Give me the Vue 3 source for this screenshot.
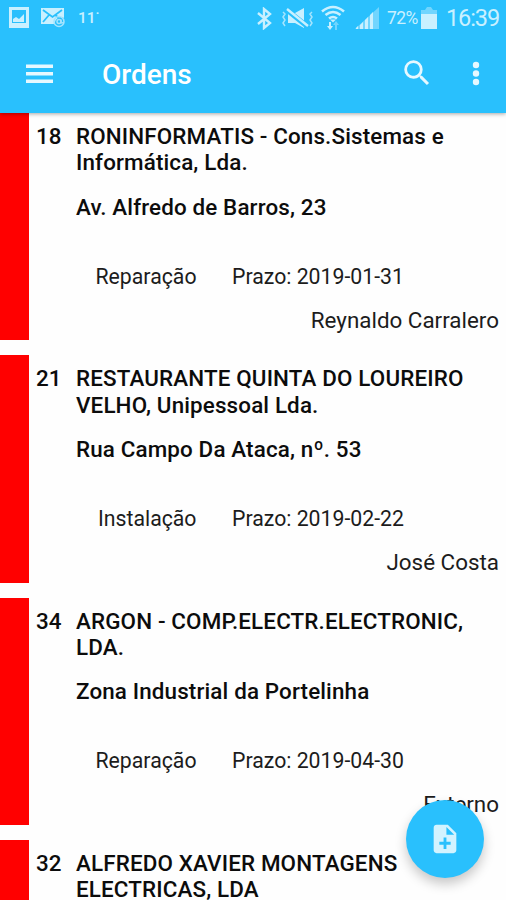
<template>
  <div class="app">
    <header class="header">
      <div class="status-bar">
        <div class="notifications">
          <svg class="status-icon" width="20" height="22" viewBox="0 0 20 22">
            <path d="M0 0h20v21H0z" />
            <path class="cut" d="M3 3h14v13H3z" />
            <path d="M4 15v-3l3-2 3 2 5-5v8z" />
          </svg>
          <svg class="status-icon mail" width="25" height="20" viewBox="0 0 25 20">
            <path d="M0 0h23v10a6 6 0 0 0-9 6H0z" />
            <path class="cut-line" d="M2 2l9.500 7L21 2M2 14l6-7M14.500 7l3 3" />
            <circle class="ring" cx="18" cy="13.500" r="5" />
            <circle class="ring" cx="18" cy="13.500" r="2" />
            <path class="ring" d="M20 11.500v3q1 1 3-.5" />
          </svg>
          <span class="temperature">11˙</span>
        </div>
        <div class="indicators">
          <svg class="status-icon" width="17" height="23" viewBox="0 0 17 23">
            <path class="line" d="M2 6l12 10-6 5V2l6 5L2 17" />
          </svg>
          <svg class="status-icon mute" width="33" height="21" viewBox="0 0 33 21">
            <path class="thin" d="M2 4l2 2-2 3 2 3-2 3 2 3M31 4l-2 2 2 3-2 3 2 3-2 3" />
            <path d="M7 5h7l9-5v20l-9-5H7z" />
            <path class="cut-line wide" d="M6 2l21 17" />
            <path class="line" d="M6 1l21 17" />
          </svg>
          <svg class="status-icon wifi" width="24" height="26" viewBox="0 0 24 26">
            <path class="line wave" d="M1 6.500q11-9 22 0M4.500 10q7.500-6 15 0M8 13.500q4-3 8 0" />
            <path d="M9 14.500h6l-3 3z" />
            <path d="M8 17h2v4h2l-3 4-3-4h2z" />
            <path class="faded" d="M14 25h2v-5h2l-3-4-3 4h2z" />
          </svg>
          <svg class="status-icon signal" width="24" height="22" viewBox="0 0 24 22">
            <path class="faded" d="M0 22L24 0v22z" />
            <path d="M1 21l2-2v3H1zM5 18l3-3v7H5zM10 13l3-3v12h-3zM15 8l3-3v17h-3z" />
          </svg>
          <span class="percent">72%</span>
          <svg class="status-icon battery" width="16" height="22" viewBox="0 0 16 22">
            <path class="faded" d="M0 3h4l2-3h4l2 3h4v5H0z" />
            <path d="M0 7h16v15H0z" />
          </svg>
          <span class="clock">16:39</span>
        </div>
      </div>
      <div class="toolbar">
        <svg class="menu" width="28" height="20" viewBox="0 0 28 20">
          <path d="M0 .500h27v3.500H0zM0 8h27v3.500H0zM0 15.500h27v3.500H0z" />
        </svg>
        <h1 class="title">Ordens</h1>
        <svg class="search" width="34" height="34" viewBox="0 0 24 24">
          <path
            d="M15.500 14h-.79l-.28-.27A6.471 6.471 0 0 0 16 9.500 6.500 6.500 0 1 0 9.500 16c1.610 0 3.090-.59 4.230-1.570l.27.28v.79l5 4.990L20.490 19l-4.990-5zm-6 0C7.010 14 5 11.990 5 9.500S7.010 5 9.500 5 14 7.010 14 9.500 11.990 14 9.500 14z"
          />
        </svg>
        <svg class="more" width="8" height="26" viewBox="0 0 8 26">
          <circle cx="4" cy="4" r="3.200" />
          <circle cx="4" cy="12.500" r="3.200" />
          <circle cx="4" cy="21" r="3.200" />
        </svg>
      </div>
    </header>

    <main class="orders">
      <article v-for="order in orders" :key="order.id" class="order">
        <span class="order-id">{{ order.id }}</span>
        <div class="order-body">
          <h2 class="client">
            <span v-for="line in order.client" :key="line" class="client-line">{{ line }}</span>
          </h2>
          <template v-if="order.address">
            <p class="address">{{ order.address }}</p>
            <div class="meta">
              <span class="type">{{ order.type }}</span>
              <span>Prazo: {{ order.deadline }}</span>
            </div>
            <p class="technician">{{ order.technician }}</p>
          </template>
        </div>
      </article>
    </main>

    <button class="fab" aria-label="Nova ordem">
      <svg width="34" height="34" viewBox="0 0 24 24">
        <path
          d="M14 2H6c-1.100 0-1.990.9-1.990 2L4 20c0 1.100.89 2 1.990 2H18c1.100 0 2-.9 2-2V8l-6-6zm2 14h-3v3h-2v-3H8v-2h3v-3h2v3h3v2zm-3-7V3.500L18.500 9H13z"
        />
      </svg>
    </button>
  </div>
</template>

<script setup>
import { ref } from 'vue'

const orders = ref([
  {
    id: 18,
    client: ['RONINFORMATIS - Cons.Sistemas e', 'Informática, Lda.'],
    address: 'Av. Alfredo de Barros, 23',
    type: 'Reparação',
    deadline: '2019-01-31',
    technician: 'Reynaldo Carralero'
  },
  {
    id: 21,
    client: ['RESTAURANTE QUINTA DO LOUREIRO', 'VELHO, Unipessoal Lda.'],
    address: 'Rua Campo Da Ataca, nº. 53',
    type: 'Instalação',
    deadline: '2019-02-22',
    technician: 'José Costa'
  },
  {
    id: 34,
    client: ['ARGON - COMP.ELECTR.ELECTRONIC,', 'LDA.'],
    address: 'Zona Industrial da Portelinha',
    type: 'Reparação',
    deadline: '2019-04-30',
    technician: 'Externo'
  },
  {
    id: 32,
    client: ['ALFREDO XAVIER MONTAGENS', 'ELECTRICAS, LDA']
  }
])
</script>

<style>
body {
  background: #fefefe;
}
</style>

<style scoped>
.app {
  position: relative;
  display: flex;
  flex-direction: column;
  height: 900px;
  overflow: hidden;
  font-family: Roboto, sans-serif;
  color: #0c0c0c;
}

.header {
  position: relative;
  z-index: 1;
  flex: none;
  height: 113px;
  background: #29c0fd;
  box-shadow: 0 1px 4px rgba(0, 0, 0, 0.35);
  color: #fff;
}

.status-bar {
  display: flex;
  justify-content: space-between;
  height: 36px;
  padding: 0 7px 0 9px;
  color: #c9f0ff;
}

.notifications,
.indicators {
  display: flex;
  align-items: center;
}

.status-icon {
  flex: none;
  fill: #c9f0ff;
}

.cut {
  fill: #29c0fd;
}

.cut-line {
  fill: none;
  stroke: #29c0fd;
  stroke-width: 1.8;
}

.cut-line.wide {
  stroke-width: 5;
}

.line {
  fill: none;
  stroke: #c9f0ff;
  stroke-width: 2.4;
}

.line.wave {
  stroke-width: 2.6;
}

.ring,
.thin {
  fill: none;
  stroke: #a5e4fe;
  stroke-width: 1.5;
}

.faded {
  opacity: 0.45;
}

.mail {
  margin: 0 0 1px 12px;
}

.temperature {
  margin-left: 12px;
  font-size: 15.5px;
  font-weight: 500;
}

.mute {
  margin-left: 8px;
}

.wifi {
  margin-left: 7px;
}

.signal {
  margin: 0 8px 0 10px;
}

.percent {
  width: 34px;
  font-size: 17.5px;
  letter-spacing: -0.6px;
}

.battery {
  margin-right: 9px;
}

.clock {
  width: 53px;
  font-size: 23.5px;
  letter-spacing: -1.1px;
}

.toolbar {
  display: flex;
  align-items: center;
  height: 76px;
  padding: 0 26px;
}

.toolbar svg {
  fill: #e6f8ff;
}

.title {
  flex: 1;
  margin: 0 0 0 48px;
  font-size: 28px;
  font-weight: 500;
}

.search {
  margin: -2px 38px 0 0;
}

.orders {
  display: flex;
  flex-direction: column;
  gap: 15px;
}

.order {
  display: flex;
  flex: none;
  box-sizing: border-box;
  height: 227.3px;
  padding: 10px 7px 0;
  border-left: 29px solid #f00;
  font-size: 22.4px;
  line-height: 26.2px;
}

.order-id {
  flex: none;
  width: 40px;
  font-weight: 500;
}

.order-body {
  flex: 1;
}

.client,
.address,
.technician {
  margin: 0;
  font-size: inherit;
  white-space: nowrap;
}

.client,
.address {
  font-weight: 500;
  letter-spacing: 0.14px;
}

.client-line {
  display: block;
}

.address {
  margin-top: 18.3px;
}

.meta {
  display: flex;
  gap: 35.5px;
  margin-top: 43.7px;
  font-size: 21.25px;
}

.meta,
.technician {
  color: #1c1c1c;
}

.type {
  width: 120.5px;
  text-align: right;
}

.technician {
  margin-top: 17px;
  text-align: right;
}

.fab {
  position: absolute;
  right: 22px;
  bottom: 22px;
  z-index: 2;
  display: flex;
  align-items: center;
  justify-content: center;
  width: 78px;
  height: 78px;
  padding: 0;
  border: none;
  border-radius: 50%;
  background: #29c0fd;
  box-shadow: 0 6px 12px rgba(0, 0, 0, 0.22);
}

.fab svg {
  fill: #d2f3ff;
}
</style>
